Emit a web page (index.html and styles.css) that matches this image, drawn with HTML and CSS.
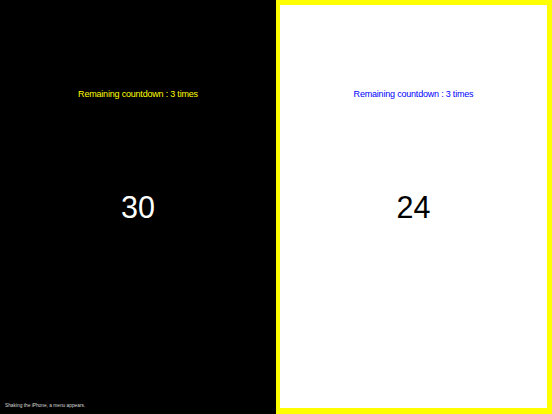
FILE: index.html
```html
<!DOCTYPE html>
<html>
<head>
<meta charset="utf-8">
<link rel="stylesheet" href="styles.css">
</head>
<body>
<div class="screen">
  <section class="panel panel-dark">
    <div class="label label-yellow">Remaining countdown : 3 times</div>
    <div class="count count-light">30</div>
    <div class="hint">Shaking the iPhone, a menu appears.</div>
  </section>
  <section class="panel panel-light">
    <div class="label label-blue">Remaining countdown : 3 times</div>
    <div class="count count-dark">24</div>
  </section>
</div>
</body>
</html>
```
FILE: styles.css
```css
* { box-sizing: border-box; }
html, body { margin: 0; padding: 0; }
body {
  width: 552px;
  height: 414px;
  overflow: hidden;
  font-family: "Liberation Sans", Arial, sans-serif;
}
.screen {
  display: flex;
  width: 552px;
  height: 414px;
}
.panel {
  width: 276px;
  height: 414px;
  display: flex;
  flex-direction: column;
  align-items: center;
}
.panel-dark {
  background: #000;
  padding-top: 87px;
}
.panel-light {
  background: #fff;
  border-style: solid;
  border-color: #ffff00;
  border-width: 5px 5px 6px 4px;
  padding-top: 82px;
}
.label {
  font-size: 9px;
  letter-spacing: -0.2px;
  line-height: 14px;
  height: 14px;
  white-space: nowrap;
}
.label-yellow { color: #ffff00; }
.label-blue { color: #0000ff; }
.count {
  margin-top: 88px;
  font-size: 30.5px;
  line-height: 36px;
}
.count-light { color: #fff; }
.count-dark { color: #000; }
.hint {
  margin-top: auto;
  align-self: flex-start;
  padding-left: 5px;
  padding-bottom: 5px;
  font-size: 4.8px;
  line-height: 7px;
  color: #d8d8d8;
  white-space: nowrap;
}
```
